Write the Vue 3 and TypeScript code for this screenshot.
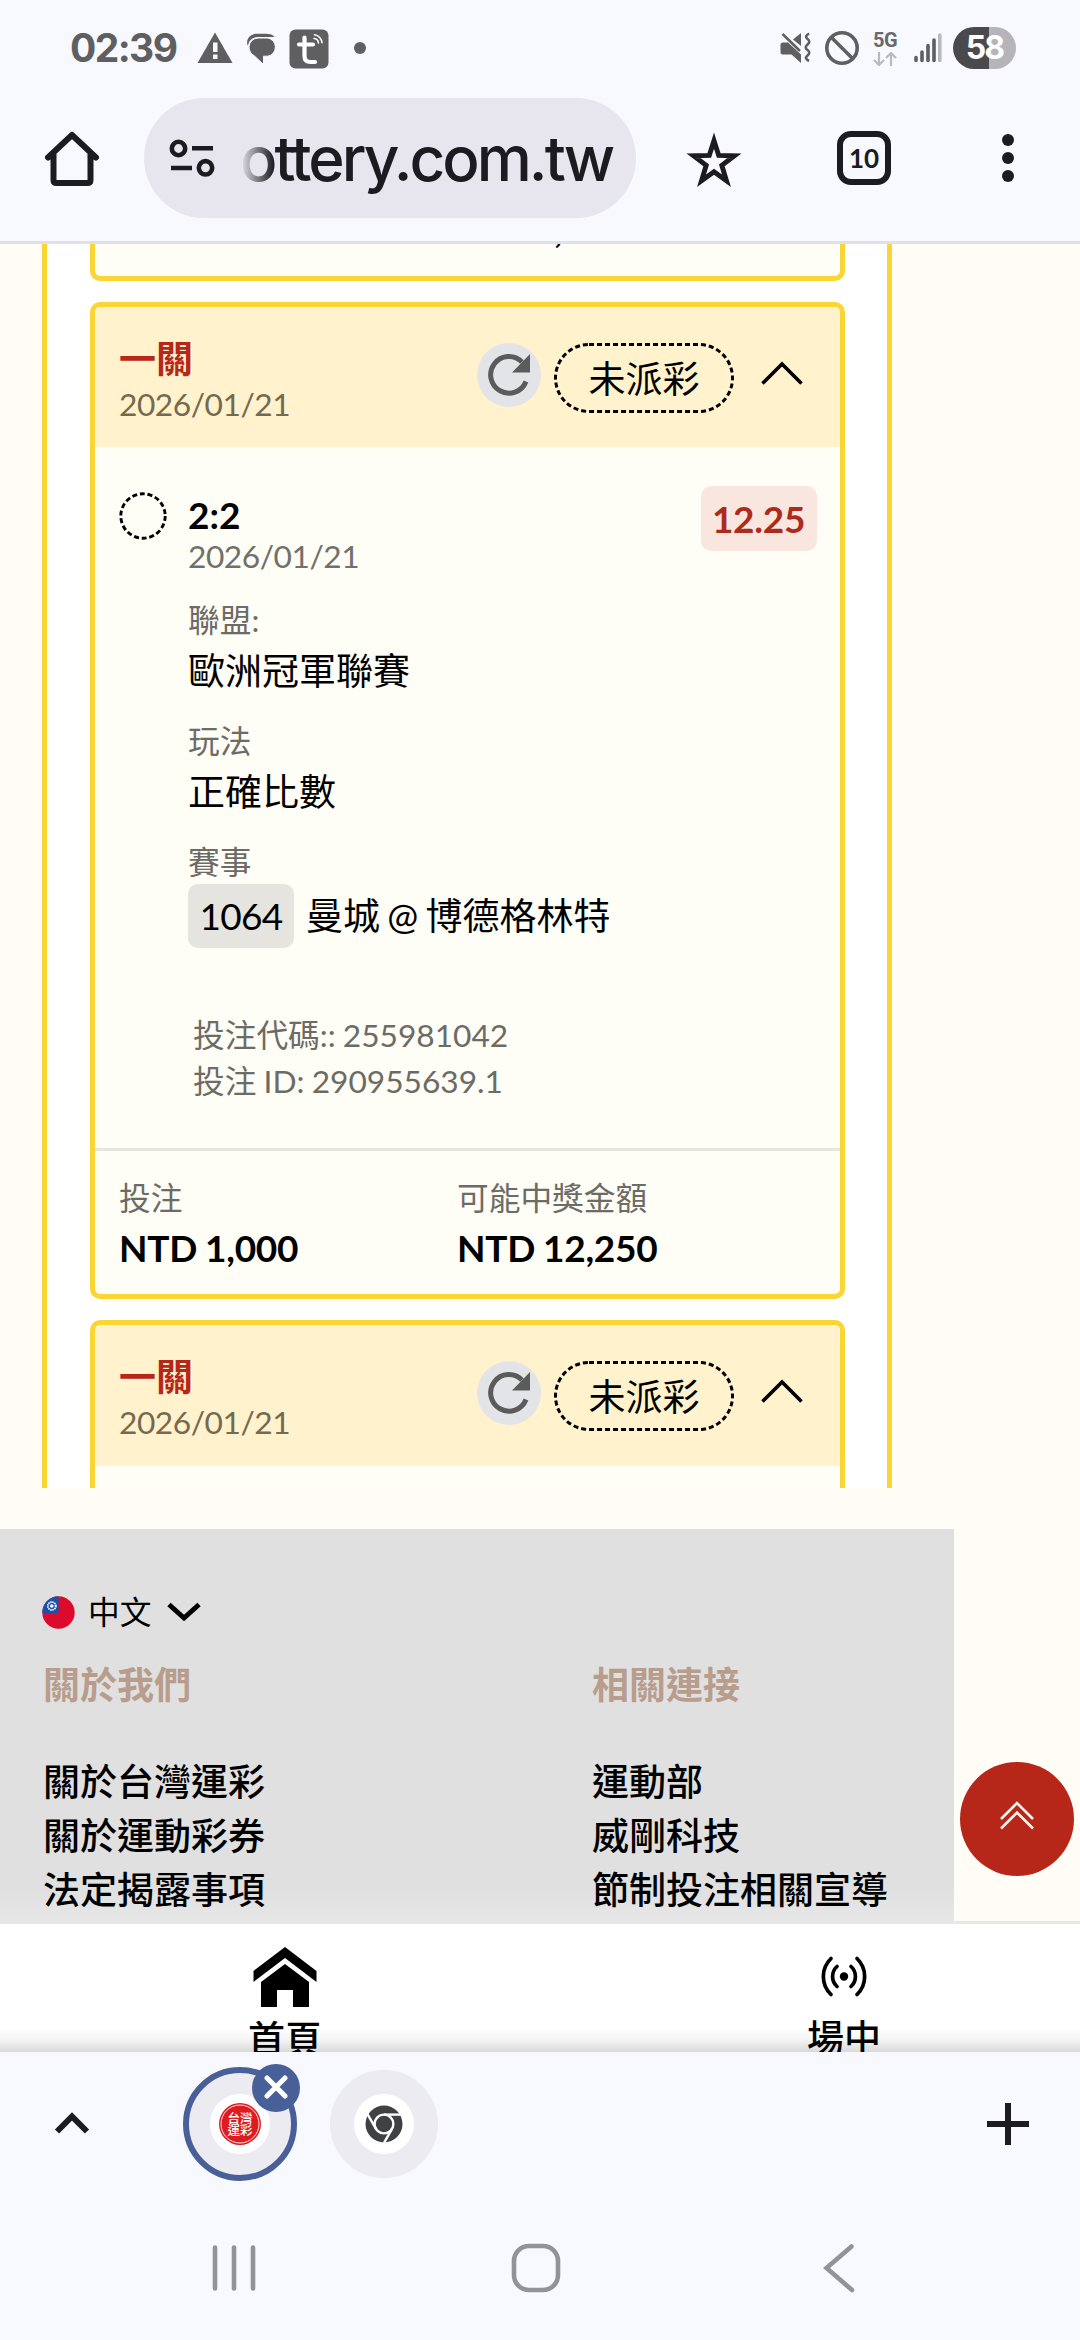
<script setup lang="ts">
interface Field {
  label: string
  value: string
  code?: string
}

interface Bet {
  title: string
  date: string
  status: string
  pick: string
  odds: string
  fields: Field[]
  betCode: string
  betId: string
  stake: string
  payout: string
}

const bet: Bet = {
  title: '一關',
  date: '2026/01/21',
  status: '未派彩',
  pick: '2:2',
  odds: '12.25',
  fields: [
    { label: '聯盟:', value: '歐洲冠軍聯賽' },
    { label: '玩法', value: '正確比數' },
    { label: '賽事', value: '曼城 @ 博德格林特', code: '1064' },
  ],
  betCode: '255981042',
  betId: '290955639.1',
  stake: 'NTD 1,000',
  payout: 'NTD 12,250',
}

const cards = [
  { bet, full: true },
  { bet, full: false },
]

const footerColumns = [
  { title: '關於我們', links: ['關於台灣運彩', '關於運動彩券', '法定揭露事項'] },
  { title: '相關連接', links: ['運動部', '威剛科技', '節制投注相關宣導'] },
]
</script>

<template>
  <div class="screen">
    <header class="status">
      <div class="status-left">
        <span class="clock">02:39</span>
        <svg class="i-warn" width="36" height="32" viewBox="0 0 36 32">
          <path d="M18 .5 35.500 31H.5z" fill="#5f5f61" />
          <path d="M16 10.500h4.500v9.500H16zM16 22.500h4.500v4.500H16z" fill="#f8f8ff" />
        </svg>
        <svg class="i-chat" width="32" height="32" viewBox="0 0 32 32">
          <path d="M2 13C-1 7 4 .8 11 .8h9c4 0 7 1.200 8.500 3.200H12C6 4 2.500 8 2 13z" fill="#5f5f61" />
          <path d="M12.500 5h9.500a9.300 9.300 0 0 1 0 18.200h-4.500V31.500l-9-8.500C5 21 3 18 3 13.800a9.200 9.200 0 0 1 9.500-8.800z" fill="#5f5f61" stroke="#f8f8ff" stroke-width="1" />
        </svg>
        <svg class="i-app" width="40" height="40" viewBox="0 0 40 40">
          <rect x=".5" y=".5" width="39" height="39" rx="6" fill="#5f5f61" />
          <path d="M15.500 8.500V27q0 6 6 6h4.500M10 15.500h14" fill="none" stroke="#fff" stroke-width="4.200" stroke-linecap="round" />
          <path d="M25 9.500a5 5 0 0 1 4.500 4.500M25.500 5.800a8.500 8.500 0 0 1 7.500 8" fill="none" stroke="#fff" stroke-width="1.600" stroke-linecap="round" />
        </svg>
        <i class="more-dot"></i>
      </div>
      <div class="status-right">
        <svg width="31" height="32" viewBox="0 0 31 32">
          <path d="M.5 13q0-2.500 2.500-2.500h5L21 22.500V31l-9.500-8.500H3q-2.500 0-2.500-2.500zM13 7.500 21 1v13z" fill="#5f5f61" />
          <path d="M2.500 2 20 19" stroke="#5f5f61" stroke-width="2.500" />
          <path d="M29 1.500q-5 3 -1.500 5.500t0 5.500 0 5.500 0 5.500 1.500 5.500" fill="none" stroke="#5f5f61" stroke-width="2.600" />
        </svg>
        <svg class="i-block" width="36" height="36" viewBox="0 0 36 36">
          <circle cx="18" cy="18" r="15.200" fill="none" stroke="#5f5f61" stroke-width="3.600" />
          <path d="M7.500 7.500l21 21" stroke="#5f5f61" stroke-width="3.600" />
        </svg>
        <div class="net">
          <span>5G</span>
          <svg width="24" height="14" viewBox="0 0 24 14">
            <path d="M6 0v13M1 8l5 5 5-5M18 14V1M13 6l5-5 5 5" fill="none" stroke="#b9b9bf" stroke-width="2.200" />
          </svg>
        </div>
        <svg class="i-signal" width="28" height="30" viewBox="0 0 28 30">
          <g stroke-width="3.600" stroke-linecap="round" stroke="#5f5f61">
            <path d="M2 24.500v3M8 19v8.500M14 12.500v15M20 7v20.500" />
            <path d="M25.800 2v25.500" stroke="#b9b9bf" />
          </g>
        </svg>
        <span class="battery">58</span>
      </div>
    </header>

    <nav class="toolbar">
      <svg class="i-home" width="56" height="56" viewBox="0 0 56 56">
        <path d="M4 27.500 28 5l24 22.500M9.500 24v26q0 3 3 3h31q3 0 3-3V24" fill="none" stroke="#1b1b20" stroke-width="6" stroke-linejoin="round" stroke-linecap="round" />
      </svg>
      <div class="omnibox">
        <svg width="46" height="40" viewBox="0 0 46 40">
          <g fill="none" stroke="#1b1b20" stroke-width="4.600">
            <circle cx="9.500" cy="9.500" r="6.700" />
            <circle cx="36.500" cy="28.800" r="6.700" />
            <path d="M23 9.300h21M2 29h21" />
          </g>
        </svg>
        <span class="url">ottery.com.tw</span>
      </div>
      <svg class="i-star" width="58" height="56" viewBox="0 0 54 52">
        <path d="M27 8l4.400 13.700L46 22 34.300 31l4.300 14.300L27 37l-11.600 8.300L19.700 31 8 22l14.600-.3z" fill="none" stroke="#1b1b20" stroke-width="4.600" stroke-linejoin="miter" />
      </svg>
      <span class="tabs">10</span>
      <span class="menu"><i></i><i></i><i></i></span>
    </nav>

    <main class="page">
      <section class="panel">
        <article class="card tail">
          <span class="amount">,</span>
        </article>

        <article v-for="(c, n) in cards" :key="n" class="card" :class="{ tall: !c.full }">
          <div class="card-head">
            <div class="head-text">
              <h2>{{ c.bet.title }}</h2>
              <time>{{ c.bet.date }}</time>
            </div>
            <svg class="i-reload" width="64" height="64" viewBox="0 0 64 64">
              <circle cx="32" cy="32" r="32" fill="#e3e4e8" />
              <path d="M49 38.500A18.300 18.300 0 1 1 45 19" fill="none" stroke="#5b5b5b" stroke-width="5" />
              <path d="M53 11v18.500H35z" fill="#5b5b5b" />
            </svg>
            <div class="status-pill">
              <svg width="180" height="70" viewBox="0 0 180 70">
                <rect x="1.500" y="1.500" width="177" height="67" rx="33.500" fill="none" stroke="#000" stroke-width="3" stroke-dasharray="5 3" />
              </svg>
              <span>{{ c.bet.status }}</span>
            </div>
            <svg class="i-fold" width="42" height="26" viewBox="0 0 42 26">
              <path d="M1.500 23.500 21 4l19.500 19.500" fill="none" stroke="#000" stroke-width="3.600" />
            </svg>
          </div>

          <template v-if="c.full">
            <div class="card-body">
              <svg class="i-pending" width="48" height="48" viewBox="0 0 48 48">
                <circle cx="24" cy="24" r="22.200" fill="none" stroke="#000" stroke-width="2.900" stroke-dasharray="4.980 2.770" />
              </svg>
              <div class="detail">
                <div class="pick">{{ c.bet.pick }}</div>
                <div class="pick-date">{{ c.bet.date }}</div>
                <div v-for="f in c.bet.fields" :key="f.label" class="field">
                  <div class="label">{{ f.label }}</div>
                  <div class="value" :class="{ coded: f.code }">
                    <span v-if="f.code" class="code">{{ f.code }}</span>{{ f.value }}
                  </div>
                </div>
                <div class="ids">
                  <div>投注代碼:: {{ c.bet.betCode }}</div>
                  <div>投注 ID: {{ c.bet.betId }}</div>
                </div>
              </div>
              <span class="odds">{{ c.bet.odds }}</span>
            </div>
            <div class="card-foot">
              <div>
                <div class="label">投注</div>
                <div class="amount">{{ c.bet.stake }}</div>
              </div>
              <div>
                <div class="label">可能中獎金額</div>
                <div class="amount">{{ c.bet.payout }}</div>
              </div>
            </div>
          </template>
        </article>
      </section>

      <footer class="footer">
        <div class="lang">
          <svg width="33" height="33" viewBox="0 0 33 33">
            <defs><clipPath id="flag"><circle cx="16.500" cy="16.500" r="16.200" /></clipPath></defs>
            <g clip-path="url(#flag)">
              <rect width="33" height="33" fill="#dc0a2d" />
              <rect width="16.500" height="17" fill="#1752ab" />
              <circle cx="9.800" cy="10" r="4" fill="none" stroke="#fff" stroke-width="1.800" stroke-dasharray="1.400 .7" />
              <circle cx="9.800" cy="10" r="1.800" fill="#fff" />
            </g>
          </svg>
          <span>中文</span>
          <svg class="i-drop" width="34" height="20" viewBox="0 0 34 20">
            <path d="M2 2.500 17 16 32 2.500" fill="none" stroke="#000" stroke-width="5" />
          </svg>
        </div>
        <div class="columns">
          <div v-for="col in footerColumns" :key="col.title" class="column">
            <h3>{{ col.title }}</h3>
            <a v-for="l in col.links" :key="l">{{ l }}</a>
          </div>
        </div>
      </footer>

      <button class="to-top" type="button">
        <svg width="36" height="32" viewBox="0 0 36 32">
          <path d="M2 19 18 3l16 16M2 28.500l16-16 16 16" fill="none" stroke="#fff3ec" stroke-width="2.600" />
        </svg>
      </button>
    </main>

    <nav class="site-nav">
      <a class="nav-home">
        <svg width="64" height="60" viewBox="0 0 64 60">
          <path d="M32 0 63.500 24v11L32 11 .5 35V24z" />
          <path d="M32 17 56 35v25H40V43H24v17H8V35z" />
        </svg>
        <span>首頁</span>
      </a>
      <a class="nav-live">
        <svg width="50" height="60" viewBox="0 0 50 60">
          <circle cx="25" cy="30.500" r="4.200" />
          <g fill="none" stroke="#000" stroke-width="3.700" stroke-linecap="round">
            <path d="M18 20.500a13.500 13.500 0 0 0 0 20M32 20.500a13.500 13.500 0 0 1 0 20M12 12.500a25 25 0 0 0 0 36M38 12.500a25 25 0 0 1 0 36" />
          </g>
        </svg>
        <span>場中</span>
      </a>
    </nav>

    <div class="tab-strip">
      <svg class="i-expand" width="36" height="24" viewBox="0 0 36 24">
        <path d="M3 20.500 18 5.500l15 15" fill="none" stroke="#1b1b20" stroke-width="6" />
      </svg>
      <div class="tab active">
        <svg width="60" height="60" viewBox="0 0 60 60">
          <circle cx="30" cy="30" r="30" fill="#fff" />
          <circle cx="30" cy="30" r="21" fill="#de1c1f" />
          <circle cx="30" cy="30" r="19" fill="none" stroke="#fff" stroke-width=".9" />
          <text x="30" y="28.500" class="logo-text">台灣</text>
          <text x="30" y="40.500" class="logo-text">運彩</text>
        </svg>
        <span class="close">
          <svg width="24" height="24" viewBox="0 0 24 24">
            <path d="M3 3l18 18M21 3 3 21" stroke="#fff" stroke-width="5" stroke-linecap="round" />
          </svg>
        </span>
      </div>
      <div class="tab">
        <svg width="60" height="60" viewBox="0 0 60 60">
          <circle cx="30" cy="30" r="30" fill="#fff" />
          <circle cx="30" cy="30" r="18.500" fill="#3f4142" />
          <g fill="none" stroke="#fff" stroke-width="2.400">
            <circle cx="30" cy="30" r="9.400" />
            <path d="M30 20.600h18" />
            <path d="M30 20.600h18" transform="rotate(120 30 30)" />
            <path d="M30 20.600h18" transform="rotate(240 30 30)" />
          </g>
        </svg>
      </div>
      <svg class="i-plus" width="42" height="42" viewBox="0 0 42 42">
        <path d="M21 0v42M0 21h42" stroke="#1b1b20" stroke-width="6" />
      </svg>
    </div>

    <div class="sys-nav">
      <svg width="44" height="50" viewBox="0 0 44 50">
        <path d="M3 4.500v41M22 4.500v41M41 4.500v41" stroke="#929299" stroke-width="4.600" stroke-linecap="round" />
      </svg>
      <svg width="50" height="50" viewBox="0 0 50 50">
        <rect x="3" y="3" width="44" height="44" rx="15" fill="none" stroke="#929299" stroke-width="4.600" />
      </svg>
      <svg width="32" height="50" viewBox="0 0 32 50">
        <path d="M28.500 3.500 3.500 25l25.500 22" fill="none" stroke="#929299" stroke-width="4.600" stroke-linecap="round" />
      </svg>
    </div>
  </div>
</template>

<style>
body {
  margin: 0;
  background: #f8f8ff;
}
</style>

<style scoped>
.screen {
  width: 1080px;
  height: 2340px;
  overflow: hidden;
  display: flex;
  flex-direction: column;
  background: #f8f8ff;
  font-family: Lato, "Noto Sans CJK TC", sans-serif;
  color: #000;
}
.screen * {
  box-sizing: border-box;
}
svg {
  display: block;
  flex: none;
}

/* status bar */
.status {
  height: 98px;
  flex: none;
  display: flex;
  justify-content: space-between;
}
.status-left,
.status-right {
  display: flex;
  align-items: center;
  height: 96px;
}
.status-left {
  padding-left: 70px;
}
.clock {
  width: 127px;
  font: 700 39px/96px Inter, sans-serif;
  letter-spacing: -1.6px;
  color: #5f5f61;
  white-space: nowrap;
}
.i-chat {
  margin: 2px 0 0 13px;
}
.i-app {
  margin: 1px 0 0 11px;
}
.more-dot {
  width: 12px;
  height: 12px;
  margin-left: 25px;
  border-radius: 50%;
  background: #5f5f61;
}
.status-right {
  padding-right: 64px;
}
.i-block {
  margin-left: 13px;
}
.net {
  width: 26px;
  margin-left: 13px;
  display: flex;
  flex-direction: column;
  gap: 3px;
}
.net span {
  font: 700 20px/18px Roboto, sans-serif;
  color: #69696c;
  letter-spacing: -0.5px;
}
.i-signal {
  margin: 0 11px 0 15px;
}
.battery {
  width: 63px;
  height: 42px;
  border-radius: 21px;
  background: linear-gradient(90deg, #4a4a4d 36px, #b4b4ba 36px);
  color: #fff;
  font: 700 32px/42px Inter, sans-serif;
  letter-spacing: -2px;
  text-align: center;
}

/* browser toolbar */
.toolbar {
  height: 146px;
  flex: none;
  display: flex;
  align-items: flex-start;
  padding-left: 44px;
  border-bottom: 3px solid #e0e1e6;
}
.i-home {
  margin-top: 32px;
}
.omnibox {
  width: 492px;
  height: 120px;
  margin-left: 44px;
  padding-left: 25px;
  border-radius: 60px;
  background: #e7e6ee;
  display: flex;
}
.omnibox svg {
  margin-top: 41px;
}
.url {
  margin-left: 25px;
  width: 380px;
  font: 500 62px/121px Inter, sans-serif;
  letter-spacing: -3px;
  color: #1b1b20;
  white-space: nowrap;
  -webkit-mask-image: linear-gradient(90deg, transparent, #000 34px);
  mask-image: linear-gradient(90deg, transparent, #000 34px);
}
.i-star {
  margin: 34px 0 0 49px;
}
.tabs {
  width: 54px;
  height: 54px;
  margin: 33px 0 0 94px;
  border: 6px solid #1b1b20;
  border-radius: 14px;
  font: 700 26px/43px Lato, sans-serif;
  text-align: center;
  color: #1b1b20;
}
.menu {
  margin: 36px 0 0 111px;
  display: flex;
  flex-direction: column;
  gap: 6px;
}
.menu i {
  width: 12px;
  height: 12px;
  border-radius: 50%;
  background: #1b1b20;
}

/* page */
.page {
  position: relative;
  height: 1677px;
  flex: none;
  overflow: hidden;
  background: #fffdf5;
}
.panel {
  width: 850px;
  height: 1244px;
  margin-left: 42px;
  padding: 0 42px 0 43px;
  overflow: hidden;
  background: #fff;
  border: solid #fad634;
  border-width: 0 5px;
}
.card {
  margin-bottom: 21px;
  border: 5px solid #fad634;
  border-radius: 10px;
  background: #fffef6;
  overflow: hidden;
}
.card.tall {
  height: 997px;
}
.tail {
  height: 36.500px;
  border-top: 0;
  border-radius: 0 0 10px 10px;
  padding-left: 459px;
}
.tail .amount {
  display: block;
  margin-top: -43px;
}
.card-head {
  height: 140.500px;
  display: flex;
  align-items: flex-start;
  padding-left: 24px;
  background: #fff2cc;
}
.head-text {
  width: 358px;
  padding-top: 29px;
}
h2 {
  margin: 0;
  font-size: 37px;
  line-height: 45px;
  font-weight: 700;
  color: #b6271a;
}
time {
  display: block;
  font-size: 31.700px;
  line-height: 46px;
  letter-spacing: -0.450px;
  color: #746a52;
}
.i-reload {
  margin-top: 36px;
}
.status-pill {
  display: grid;
  margin: 36px 0 0 13px;
}
.status-pill > * {
  grid-area: 1 / 1;
}
.status-pill span {
  font-size: 37px;
  line-height: 71px;
  text-align: center;
}
.i-fold {
  margin: 53px 0 0 27px;
}
.card-body {
  height: 701px;
  display: flex;
  align-items: flex-start;
  padding: 44.500px 23.500px 0 24px;
}
.detail {
  flex: 1;
  margin-left: 21px;
  padding-top: 1px;
}
.pick {
  font-size: 37px;
  line-height: 44px;
  font-weight: 700;
}
.pick-date {
  font-size: 31.700px;
  line-height: 38px;
  letter-spacing: -0.450px;
  color: #717069;
  margin-bottom: 23.500px;
}
.field {
  height: 121px;
}
.label {
  font-size: 31.700px;
  line-height: 44px;
  color: #6c6b65;
}
.value {
  font-size: 37px;
  line-height: 57px;
  word-spacing: -2.200px;
  white-space: nowrap;
}
.value.coded {
  display: flex;
  line-height: 64px;
}
.code {
  width: 106px;
  height: 64px;
  margin-right: 12px;
  border-radius: 10px;
  background: #e6e4de;
  letter-spacing: -0.700px;
  line-height: 64px;
  text-align: center;
}
.ids {
  margin-top: 51px;
  padding-left: 5px;
  font-size: 31.700px;
  line-height: 46px;
  word-spacing: -0.900px;
  color: #6c6b65;
}
.odds {
  width: 116px;
  height: 65px;
  margin-top: -6px;
  border-radius: 10px;
  background: #f8e6df;
  color: #ac2a1e;
  font-size: 37px;
  line-height: 66px;
  font-weight: 700;
  letter-spacing: -0.300px;
  text-align: center;
}
.card-foot {
  height: 146px;
  display: flex;
  padding: 25px 0 0 24px;
  border-top: 3px solid #e6e5de;
}
.card-foot > div {
  width: 338px;
}
.amount {
  font-size: 37px;
  line-height: 56px;
  font-weight: 700;
  letter-spacing: -0.250px;
  word-spacing: -0.800px;
}

/* footer */
.footer {
  width: 954px;
  height: 392px;
  margin-top: 41px;
  padding-left: 42px;
  background: linear-gradient(#e0e0e0 360px, #e7e7e7);
}
.lang {
  display: flex;
  align-items: center;
  padding-top: 59px;
  height: 107px;
  font-size: 31.700px;
}
.lang span {
  margin: 0 16px 0 13px;
  line-height: 48px;
}
.columns {
  display: flex;
  padding: 22px 0 0 1px;
}
.column {
  width: 549px;
  flex: none;
}
h3 {
  margin: 0 0 43px;
  font-size: 37px;
  line-height: 54px;
  font-weight: 700;
  color: #b89d8d;
}
.column a {
  display: block;
  font-size: 37px;
  line-height: 54px;
  font-weight: 500;
}
.to-top {
  position: absolute;
  left: 960px;
  top: 1518px;
  width: 114px;
  height: 114px;
  padding: 0 0 6px;
  border: 0;
  border-radius: 50%;
  background: #b6271a;
  display: flex;
  align-items: center;
  justify-content: center;
}

/* site navigation */
.site-nav {
  height: 131px;
  flex: none;
  overflow: hidden;
  display: flex;
  border-top: 3px solid #e7e7e8;
  background: linear-gradient(#fff 104px, #f5f5f5 115px, #d9d9d9);
}
.site-nav a {
  display: flex;
  flex: none;
  flex-direction: column;
  align-items: center;
  width: 570px;
  padding-top: 23px;
}
.site-nav .nav-live {
  width: 548px;
  padding-top: 22px;
}
.site-nav span {
  font-size: 37px;
  line-height: 54px;
  font-weight: 500;
  margin-top: 5px;
}

/* tab strip */
.tab-strip {
  height: 148px;
  flex: none;
  display: flex;
  align-items: flex-start;
  padding-left: 54px;
}
.i-expand {
  margin-top: 59px;
}
.tab {
  width: 108px;
  height: 108px;
  margin: 18px 0 0 33px;
  border-radius: 50%;
  background: #ecebf2;
  display: flex;
  align-items: center;
  justify-content: center;
}
.tab.active {
  position: relative;
  width: 114px;
  height: 114px;
  margin: 15px 0 0 93px;
  border: 6px solid #485f97;
}
.close {
  position: absolute;
  right: -9px;
  top: -9px;
  width: 48px;
  height: 48px;
  border-radius: 50%;
  background: #485f97;
  display: flex;
  align-items: center;
  justify-content: center;
  padding-bottom: 2px;
}
.logo-text {
  font: 500 12.500px "Noto Sans CJK TC", sans-serif;
  text-anchor: middle;
  fill: #fff;
}
.i-plus {
  margin: 51px 0 0 549px;
}

/* system navigation */
.sys-nav {
  display: flex;
  align-items: center;
  padding: 43px 0 0 212px;
}
.sys-nav svg + svg {
  margin-left: 255px;
}
.sys-nav svg:last-child {
  margin-left: 262px;
}
</style>
